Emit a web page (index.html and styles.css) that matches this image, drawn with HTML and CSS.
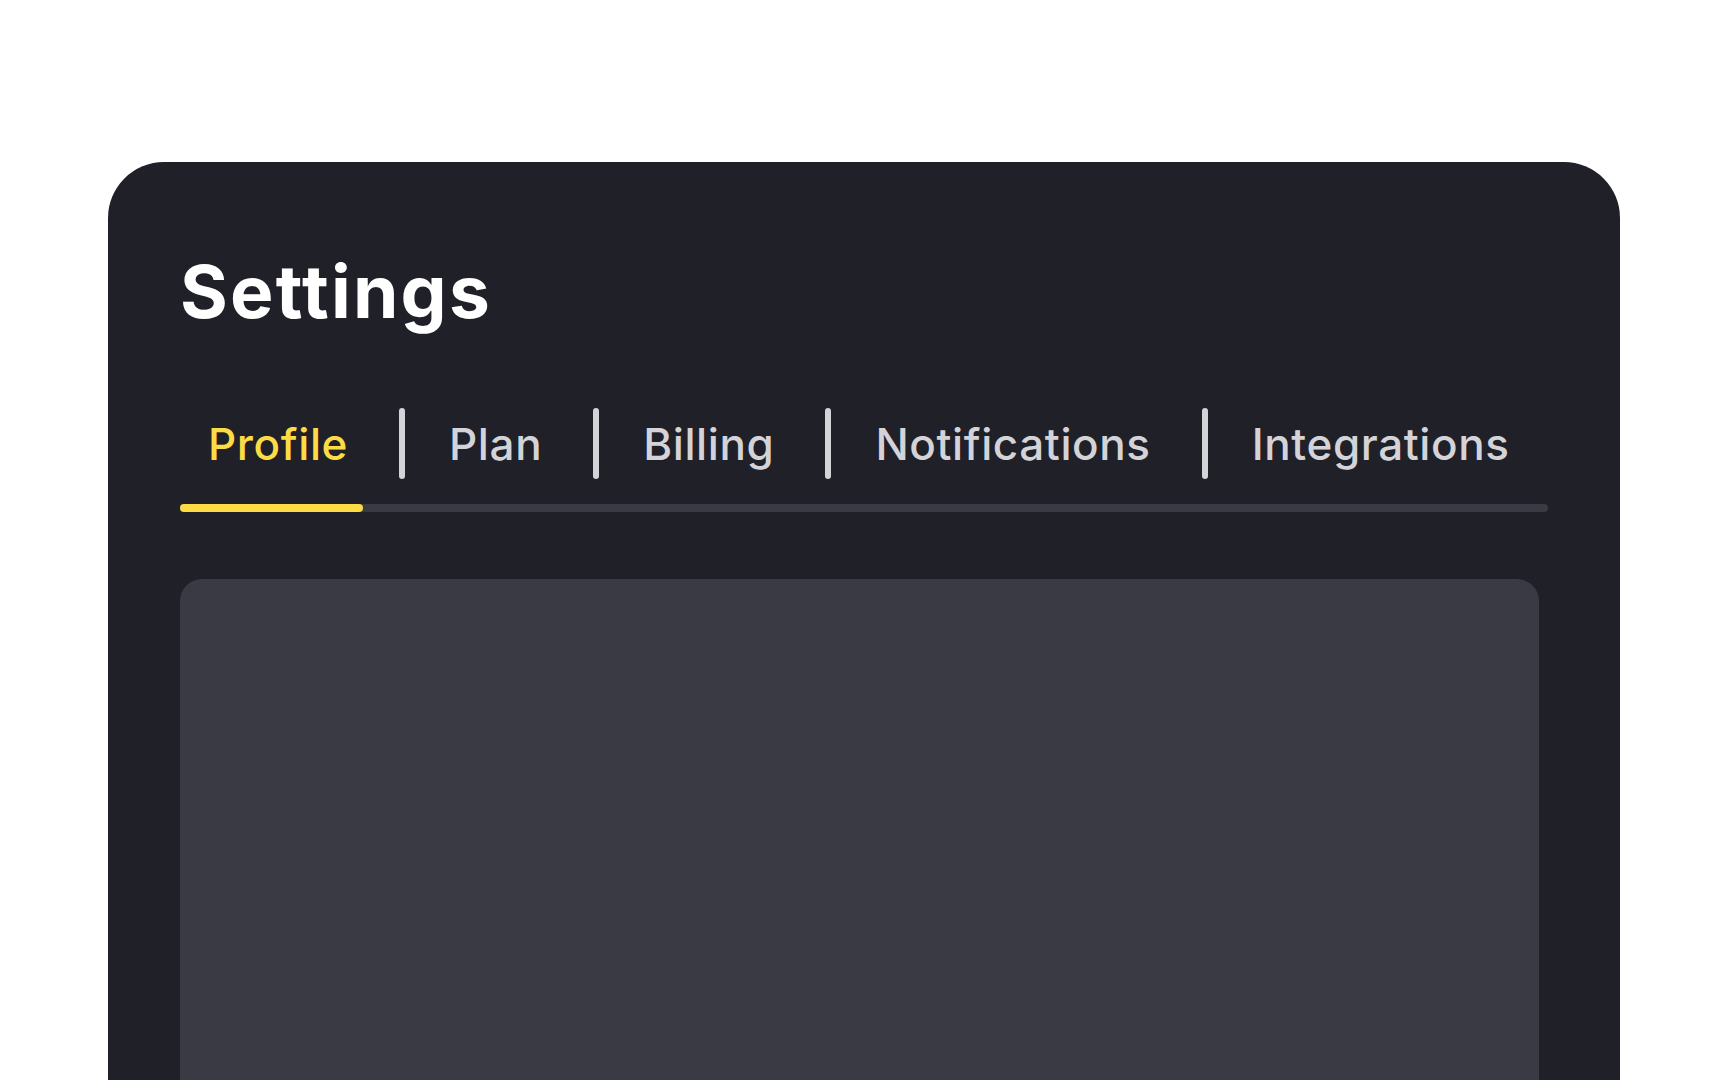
FILE: index.html
```html
<!DOCTYPE html>
<html lang="en">
<head>
    <meta charset="UTF-8">
    <meta name="viewport" content="width=device-width, initial-scale=1.0">
    <title>Settings</title>
    <link rel="stylesheet" href="styles.css">
</head>
<body>
    <div class="card">
        <h1 class="title">Settings</h1>
        <div class="tabs">
            <span class="tab active">Profile</span>
            <i class="sep"></i>
            <span class="tab">Plan</span>
            <i class="sep"></i>
            <span class="tab">Billing</span>
            <i class="sep"></i>
            <span class="tab">Notifications</span>
            <i class="sep"></i>
            <span class="tab">Integrations</span>
        </div>
        <div class="track">
            <div class="bar"></div>
        </div>
        <div class="panel"></div>
    </div>
</body>
</html>
```

FILE: styles.css
```css
* {
    padding: 0;
    margin: 0;
    box-sizing: border-box;
}
html, body {
    overflow: hidden;
}
body {
    background-color: #fff;
    font-family: Inter, "Noto Sans", sans-serif;
}
.card {
    width: 1512px;
    min-height: 1000px;
    margin: 162px 0 0 108px;
    padding: 72px 72px 0;
    background-color: #202029;
    border-radius: 56px 56px 0 0;
}
.title {
    margin-top: 21px;
    font-size: 73px;
    font-weight: 700;
    line-height: 1;
    color: #fff;
    letter-spacing: 2.2px;
}
.tabs {
    display: flex;
    align-items: center;
    margin-top: 80px;
    height: 71px;
}
.tab {
    padding: 0 28px;
    font-size: 44px;
    font-weight: 500;
    letter-spacing: 0.6px;
    color: #d4d4d8;
}
.tab.active {
    color: #fbdc45;
}
.sep {
    width: 6px;
    height: 71px;
    margin: 0 16px 0 23px;
    border-radius: 3px;
    background-color: #d4d4d8;
}
.track {
    margin-top: 25px;
    height: 8px;
    border-radius: 4px;
    background-color: #3a3a44;
}
.bar {
    width: 183px;
    height: 8px;
    border-radius: 4px;
    background-color: #fbdc45;
}
.panel {
    width: 1359px;
    height: 600px;
    margin-top: 67px;
    border-radius: 22px;
    background-color: #3a3a44;
}
```
